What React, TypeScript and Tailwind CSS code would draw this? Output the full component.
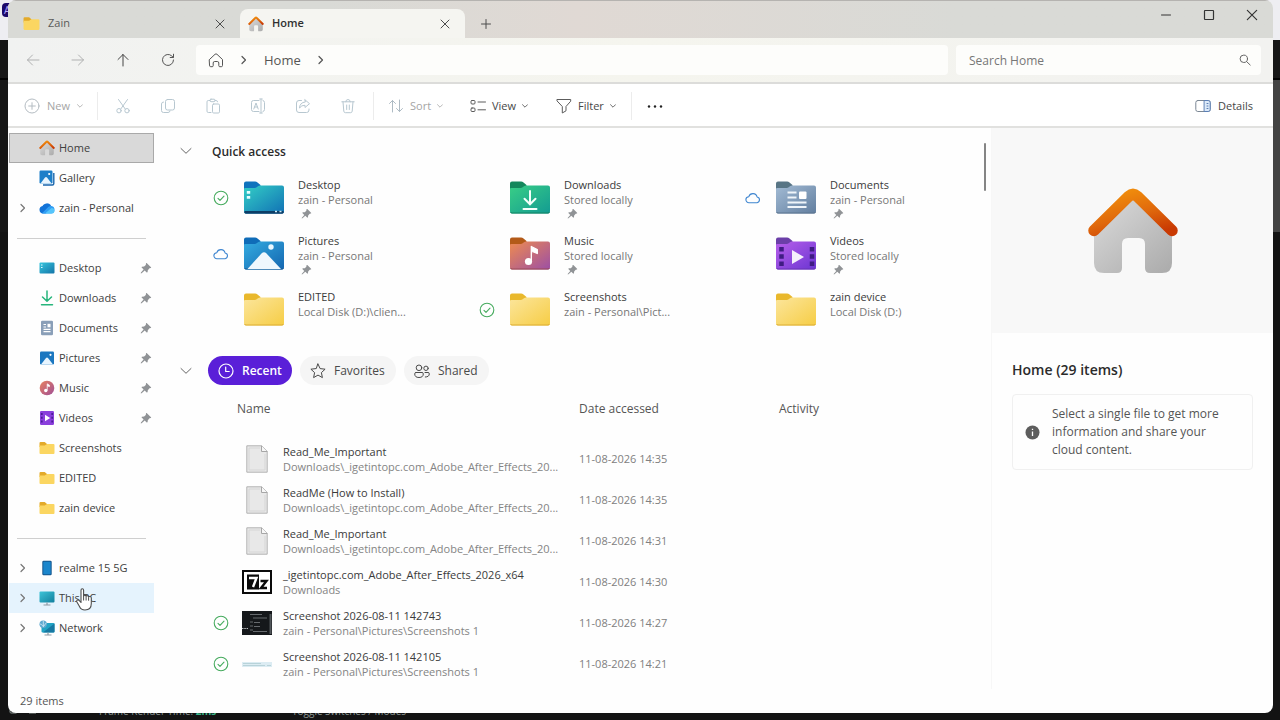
import { ReactNode } from "react";

// Types used by the lists
type SyncState = "synced" | "cloud" | "none";

interface SideItem {
  name: string;
  icon: ReactNode;
  pinned?: boolean;
  expandable?: boolean;
  active?: boolean;
  hovered?: boolean;
}

interface QuickItem {
  name: string;
  place: string;
  kind: FolderKind;
  sync: SyncState;
  pinned?: boolean;
}

interface RecentFile {
  name: string;
  place: string;
  date: string;
  thumb: ReactNode;
  sync: SyncState;
}

type FolderKind =
  | "desktop"
  | "downloads"
  | "documents"
  | "pictures"
  | "music"
  | "videos"
  | "plain";

/* ---------- line icons ---------- */

interface LineProps {
  className?: string;
  box?: number;
  width?: number;
  children: ReactNode;
}

const Line = ({ className = "size-4", box = 16, width = 1, children }: LineProps) => (
  <svg
    className={`shrink-0 ${className}`}
    viewBox={`0 0 ${box} ${box}`}
    fill="none"
    stroke="currentColor"
    strokeWidth={width}
    strokeLinecap="round"
    strokeLinejoin="round"
    aria-hidden="true"
  >
    {children}
  </svg>
);

const ChevronRight = ({ className = "size-3" }: { className?: string }) => (
  <Line className={className} box={12} width={1.2}>
    <path d="M4 2.5 7.500 6 4 9.500" />
  </Line>
);

const ChevronDown = ({ className = "size-3" }: { className?: string }) => (
  <Line className={className} box={12}>
    <path d="M1 3.500 6 8.300l5-4.800" />
  </Line>
);

// Small chevron of the toolbar drop-downs
const Caret = ({ className = "" }: { className?: string }) => (
  <Line className={`size-[6px] ${className}`} box={6} width={0.8}>
    <path d="M.5 1.700 3 4.200l2.500-2.500" />
  </Line>
);

const Close = ({ className = "size-3" }: { className?: string }) => (
  <Line className={className} box={12}>
    <path d="m2 2 8 8M10 2l-8 8" />
  </Line>
);

const Pin = ({ className = "size-3" }: { className?: string }) => (
  <svg className={`shrink-0 ${className}`} viewBox="0 0 12 12" aria-hidden="true">
    <path
      d="M6.9 1.2 11 5.2c.3.4.1.8-.3.9l-1.2.2-1.7 1.9-.2 1.9c-.1.4-.5.6-.9.3l-2-1.9-3.1 2.8-.8.1.1-.8 2.7-3.1-1.9-1.9c-.3-.4-.1-.8.3-.9l2.1-.2 1.7-1.6.2-1.4c.1-.5.6-.6.9-.3Z"
      fill="#909396"
    />
  </svg>
);

/* ---------- coloured icons ---------- */

const HomeLogo = ({ id, className = "size-4" }: { id: string; className?: string }) => (
  <svg className={`shrink-0 ${className}`} viewBox="0 0 92 88" aria-hidden="true">
    <defs>
      <linearGradient id={`${id}-roof`} x1="0.3" y1="0" x2="0.9" y2="1">
        <stop offset="0" stopColor="#ef8a0c" />
        <stop offset="0.5" stopColor="#e0690c" />
        <stop offset="1" stopColor="#c93a03" />
      </linearGradient>
      <linearGradient id={`${id}-wall`} x1="0" y1="0" x2="0.9" y2="1">
        <stop offset="0" stopColor="#dcdcdc" />
        <stop offset="1" stopColor="#adadad" />
      </linearGradient>
    </defs>
    <path
      d="M46 10 7 46v30q0 10 10 10h13q5 0 5-5V57q0-6 6-6h11q6 0 6 6v24q0 5 5 5h12q10 0 10-10V46Z"
      fill={`url(#${id}-wall)`}
    />
    <path
      d="M7 43.5 41.5 9.5Q46 5.5 50.5 9.5L85 43.5"
      fill="none"
      stroke={`url(#${id}-roof)`}
      strokeWidth="11.5"
      strokeLinecap="round"
      strokeLinejoin="round"
    />
  </svg>
);

const SmallFolder = ({ className = "size-4" }: { className?: string }) => (
  <svg className={`shrink-0 ${className}`} viewBox="0 0 16 16" aria-hidden="true">
    <path d="M.5 3q0-1 1-1h4.200L8 4v3H.5Z" fill="#e3aa2a" />
    <path d="M.5 5.5h5.200L8 4h6.500q1 0 1 1v8q0 1-1 1h-13q-1 0-1-1Z" fill="#fbd661" />
  </svg>
);

const Gallery = () => (
  <svg className="size-4 shrink-0" viewBox="0 0 16 16" aria-hidden="true">
    <path d="M14.800 3v10.500q0 1.500-1.500 1.500H4" fill="none" stroke="#1a66ad" strokeWidth="1.4" />
    <rect x=".5" y=".5" width="13" height="13" rx="1.2" fill="#1d7fc9" />
    <path d="m1.500 13.500 4.500-6q1-1.200 2 0l4.600 6Z" fill="#e8f5ff" />
    <circle cx="10.2" cy="4" r="1.1" fill="#fff" />
  </svg>
);

const OneDrive = () => (
  <svg className="size-4 shrink-0" viewBox="0 0 16 16" aria-hidden="true">
    <path d="M4 13.500a3.800 3.800 0 0 1-.5-7.500A5 5 0 0 1 12 5.500l-5 8Z" fill="#1273d8" />
    <path d="M4 13.500a4 4 0 0 1-1-.2L9.500 6.800a4 4 0 0 1 3-.8 3.800 3.800 0 0 1-.5 7.500Z" fill="#2f9df4" />
    <path d="M6 13.500 12.500 8a3 3 0 0 1 3 3.200 2.500 2.500 0 0 1-2.500 2.300Z" fill="#55c5fb" />
  </svg>
);

const DesktopIcon = () => (
  <svg className="size-4 shrink-0" viewBox="0 0 16 16" aria-hidden="true">
    <defs>
      <linearGradient id="side-desktop" x1="0" y1="0" x2="1" y2="1">
        <stop offset="0" stopColor="#36c6dd" />
        <stop offset="1" stopColor="#1474a8" />
      </linearGradient>
    </defs>
    <rect x=".5" y="2.5" width="15" height="11" rx="1" fill="url(#side-desktop)" />
    <path d="M2 5h1.500M2 7.500h1.500" stroke="#dff8ff" strokeWidth="1.2" />
  </svg>
);

const DownloadIcon = () => (
  <Line className="size-4 text-[#27b57c]" width={1.5}>
    <path d="M8 1v10M3.500 7 8 11.300 12.500 7M2.500 14.800h11" />
  </Line>
);

const DocumentIcon = () => (
  <svg className="size-4 shrink-0" viewBox="0 0 16 16" aria-hidden="true">
    <rect x="2" y=".8" width="12" height="14.4" rx="1.2" fill="#8a9fb8" />
    <path d="M4.500 4.500H7M4.500 7H7M4.500 9.300h7M4.500 11.700h7" stroke="#fff" strokeWidth="1.2" />
    <path d="M8.500 3.800h3v3.500h-3Z" fill="#fff" />
  </svg>
);

const PictureIcon = () => (
  <svg className="size-4 shrink-0" viewBox="0 0 16 16" aria-hidden="true">
    <rect x="1" y="1.5" width="14" height="13" rx="1.2" fill="#1b77c0" />
    <path d="m2 14.500 5-6.500q1-1.200 2 0l5 6.500Z" fill="#e8f5ff" />
    <circle cx="11.5" cy="4.8" r="1.1" fill="#fff" />
  </svg>
);

const MusicIcon = () => (
  <svg className="size-4 shrink-0" viewBox="0 0 16 16" aria-hidden="true">
    <defs>
      <linearGradient id="side-music" x1="0" y1="0" x2="1" y2="1">
        <stop offset="0" stopColor="#e9825f" />
        <stop offset="1" stopColor="#a04f96" />
      </linearGradient>
    </defs>
    <circle cx="8" cy="8" r="7.3" fill="url(#side-music)" />
    <circle cx="6.8" cy="10.5" r="1.7" fill="#fff" />
    <path d="M8.200 10.500V3.800l2.300 1.400v1.400L8.500 6" fill="#fff" stroke="#fff" strokeWidth=".7" />
  </svg>
);

const VideoIcon = () => (
  <svg className="size-4 shrink-0" viewBox="0 0 16 16" aria-hidden="true">
    <rect x="1" y="1" width="14" height="14" rx="1.2" fill="#8a3fdc" />
    <path d="M2.800 3v10.500M13.200 3v10.500" stroke="#4b1d97" strokeWidth="1.7" strokeDasharray="2 1.8" />
    <path d="m6 4.800 5.200 3.200L6 11.300Z" fill="#fff" />
  </svg>
);

const PhoneIcon = () => (
  <svg className="size-4 shrink-0" viewBox="0 0 16 16" aria-hidden="true">
    <rect x="3.3" y=".8" width="9.4" height="14.4" rx="1.3" fill="#15568e" />
    <rect x="4.3" y="1.8" width="7.4" height="12.4" rx=".6" fill="#1b86cc" />
  </svg>
);

const ComputerIcon = () => (
  <svg className="size-4 shrink-0" viewBox="0 0 16 16" aria-hidden="true">
    <defs>
      <linearGradient id="side-pc" x1="0" y1="0" x2="1" y2="1">
        <stop offset="0" stopColor="#3cc4d8" />
        <stop offset="1" stopColor="#127f9d" />
      </linearGradient>
    </defs>
    <rect x=".5" y="1.5" width="15" height="11" rx="1" fill="url(#side-pc)" />
    <path d="M8 12.500v2M4.500 15h7" stroke="#8e9aa3" strokeWidth="1.2" />
  </svg>
);

const NetworkIcon = () => (
  <svg className="size-4 shrink-0" viewBox="0 0 16 16" aria-hidden="true">
    <rect x="2.5" y="3" width="13" height="9.5" rx="1" fill="#22a3c4" />
    <path d="m4 12.500 11.500-9v8q0 1-1 1Z" fill="#1778a2" />
    <path d="M9 12.500v2M5.500 15h7" stroke="#8e9aa3" strokeWidth="1.2" />
    <circle cx="4.200" cy="4.200" r="3.700" fill="#5fa9cf" />
    <path d="M1 4c2 0 2 2 3.500 2S6 3 7.500 3M4.300 1v6" fill="none" stroke="#d5eef8" strokeWidth=".8" />
  </svg>
);

const Synced = () => (
  <Line className="size-4 text-[#46ab5e]" width={1.1}>
    <circle cx="8" cy="8" r="6.8" />
    <path d="m5 8.300 2 2 4-4.200" />
  </Line>
);

const Cloud = () => (
  <Line className="size-4 text-[#3f86d0]" width={1.1}>
    <path d="M4 12.700a3 3 0 0 1-.2-6A4.300 4.300 0 0 1 12.100 7a2.900 2.900 0 0 1 0 5.700Z" />
  </Line>
);

const SyncIcon = ({ state }: { state: SyncState }) => (
  <span className="flex size-4 shrink-0 items-center justify-center">
    {state === "synced" && <Synced />}
    {state === "cloud" && <Cloud />}
  </span>
);

/* ---------- big folders of quick access ---------- */

const folderColors: Record<FolderKind, { tab: string; from: string; to: string; edge: string }> = {
  desktop: { tab: "#0f73bd", from: "#30c5c4", to: "#1171b5", edge: "#0d4f80" },
  downloads: { tab: "#14875c", from: "#35c987", to: "#139b92", edge: "#158263" },
  documents: { tab: "#587585", from: "#9cb5cf", to: "#627e9f", edge: "#5d758f" },
  pictures: { tab: "#0f6cb8", from: "#31a5dc", to: "#1466b0", edge: "#135a96" },
  music: { tab: "#b35a18", from: "#e68558", to: "#9c4fa5", edge: "#9a4b55" },
  videos: { tab: "#6b3fa8", from: "#b05be8", to: "#6b35d2", edge: "#6a35b5" },
  plain: { tab: "#e9b82c", from: "#fbe393", to: "#f6cd45", edge: "#dcae37" },
};

const folderArt: Record<FolderKind, ReactNode> = {
  desktop: (
    <>
      <path d="M1.500 31h39v1.500q0 1-1 1h-37q-1 0-1-1Z" fill="#0d3d66" />
      <path d="M5.500 11v2.800M5.500 16v2.800" stroke="#e6feff" strokeWidth="3.4" />
      <path d="M32 31.500h2M36.500 31.500h2" stroke="#d0ecf8" strokeWidth="1.5" />
    </>
  ),
  downloads: (
    <path
      d="M21 11V24M15.500 18.800l5.500 5.500 5.500-5.500M14.500 29h13"
      fill="none"
      stroke="#f4fffb"
      strokeWidth="2"
      strokeLinecap="round"
    />
  ),
  documents: (
    <>
      <path d="M12.500 12.500h9M12.500 17.500h9M12.500 22.500h19M12.500 27h19" stroke="#f0f5fa" strokeWidth="2" />
      <rect x="24" y="11.5" width="7.5" height="7.5" rx="1" fill="#fff" />
    </>
  ),
  pictures: (
    <>
      <path d="m4.500 33 14-15.500q2.500-2.600 5 0L38 33Z" fill="#eff7fd" />
      <circle cx="28" cy="11" r="2.7" fill="#e9f8ff" />
    </>
  ),
  music: (
    <>
      <circle cx="19.5" cy="25.500" r="3.6" fill="#fff" />
      <path d="M22.300 25.500V10.500l6 3v4l-5-2" fill="#fff" stroke="#fff" strokeWidth="1.3" strokeLinejoin="round" />
    </>
  ),
  videos: (
    <>
      <path d="M6.500 11v21M37 11v21" stroke="#3f1c83" strokeWidth="4.5" strokeDasharray="4.5 2.7" />
      <path d="m17 14 12 7-12 7Z" fill="#f5f0fb" />
    </>
  ),
  plain: null,
};

const Folder = ({ kind, id }: { kind: FolderKind; id: string }) => {
  const color = folderColors[kind];
  return (
    <svg className="h-9 w-[42px] shrink-0" viewBox="0 0 42 36" aria-hidden="true">
      <defs>
        <linearGradient id={id} x1="0" y1="0" x2="1" y2="1">
          <stop offset="0.1" stopColor={color.from} />
          <stop offset="1" stopColor={color.to} />
        </linearGradient>
      </defs>
      <path d="M1 3.500q0-2 2-2h9q1.500 0 2.500 1L17.500 5v4.500H1Z" fill={color.tab} />
      <path
        d="M1 9q0-1 1-1h9.500q1.500 0 2.500-1l1-.8q1-.7 2.200-.7H39q2 0 2 2v24q0 2-2 2H3q-2 0-2-2Z"
        fill={`url(#${id})`}
      />
      <path d="M1.500 32q.3 1 1.500 1h36q1.200 0 1.500-1" fill="none" stroke={color.edge} />
      {folderArt[kind]}
    </svg>
  );
};

/* ---------- thumbnails of recent files ---------- */

const TextFile = () => (
  <svg className="h-7 w-[22px]" viewBox="0 0 22 28" aria-hidden="true">
    <path d="M.8.8h15l5.400 5.400v21H.8Z" fill="#e8e8e8" stroke="#b2b2b2" />
    <path d="M3 3h11M3 3v22h16V9" fill="none" stroke="#d6d6d6" />
    <path d="M15.500.8v5.700h5.700" fill="#f7f7f7" stroke="#a6a6a6" />
  </svg>
);

const SevenZip = () => (
  <svg className="h-6 w-[30px]" viewBox="0 0 30 24" aria-hidden="true">
    <rect x="1" y="1" width="28" height="22" fill="#fff" stroke="#0b0b0b" strokeWidth="2" />
    <rect x="5" y="4.500" width="12" height="15" fill="#0b0b0b" />
    <path d="M7 8h7.500l-3.500 9" fill="none" stroke="#fff" strokeWidth="2.4" />
    <path d="M18.500 11h6l-5.500 7h6" fill="none" stroke="#0b0b0b" strokeWidth="2.4" />
  </svg>
);

const DarkShot = () => (
  <svg className="h-6 w-[30px]" viewBox="0 0 30 24" aria-hidden="true">
    <rect width="30" height="24" fill="#15181b" />
    <path d="M8 3.500h12M11 7h14M8 11h3M12 11.500h6M8 15h3M12 15.500h6M8 19h3M11 20.500h14" stroke="#6f7478" strokeWidth=".9" />
    <path d="M0 17.500h6" stroke="#b9bdc0" strokeDasharray="1.500 .8" />
    <path d="M28.500 3v20" stroke="#52575b" strokeWidth="2" />
  </svg>
);

const LightShot = () => (
  <svg className="h-6 w-[30px]" viewBox="0 0 30 24" aria-hidden="true">
    <rect y="10" width="30" height="5" fill="#dcecf3" />
    <path d="M1 11.500h18M1 13.500h22M25 13.500h4" stroke="#b3d0d6" strokeWidth=".9" />
  </svg>
);

/* ---------- data ---------- */

const sideGroups: SideItem[][] = [
  [
    { name: "Home", icon: <HomeLogo id="side-home" />, active: true },
    { name: "Gallery", icon: <Gallery /> },
    { name: "zain - Personal", icon: <OneDrive />, expandable: true },
  ],
  [
    { name: "Desktop", icon: <DesktopIcon />, pinned: true },
    { name: "Downloads", icon: <DownloadIcon />, pinned: true },
    { name: "Documents", icon: <DocumentIcon />, pinned: true },
    { name: "Pictures", icon: <PictureIcon />, pinned: true },
    { name: "Music", icon: <MusicIcon />, pinned: true },
    { name: "Videos", icon: <VideoIcon />, pinned: true },
    { name: "Screenshots", icon: <SmallFolder /> },
    { name: "EDITED", icon: <SmallFolder /> },
    { name: "zain device", icon: <SmallFolder /> },
  ],
  [
    { name: "realme 15 5G", icon: <PhoneIcon />, expandable: true },
    { name: "This PC", icon: <ComputerIcon />, expandable: true, hovered: true },
    { name: "Network", icon: <NetworkIcon />, expandable: true },
  ],
];

const quickItems: QuickItem[] = [
  { name: "Desktop", place: "zain - Personal", kind: "desktop", sync: "synced", pinned: true },
  { name: "Downloads", place: "Stored locally", kind: "downloads", sync: "none", pinned: true },
  { name: "Documents", place: "zain - Personal", kind: "documents", sync: "cloud", pinned: true },
  { name: "Pictures", place: "zain - Personal", kind: "pictures", sync: "cloud", pinned: true },
  { name: "Music", place: "Stored locally", kind: "music", sync: "none", pinned: true },
  { name: "Videos", place: "Stored locally", kind: "videos", sync: "none", pinned: true },
  { name: "EDITED", place: "Local Disk (D:)\\clien...", kind: "plain", sync: "none" },
  { name: "Screenshots", place: "zain - Personal\\Pict...", kind: "plain", sync: "synced" },
  { name: "zain device", place: "Local Disk (D:)", kind: "plain", sync: "none" },
];

const longPlace = "Downloads\\_igetintopc.com_Adobe_After_Effects_20...";
const shotPlace = "zain - Personal\\Pictures\\Screenshots 1";

const recentFiles: RecentFile[] = [
  { name: "Read_Me_Important", place: longPlace, date: "11-08-2026 14:35", thumb: <TextFile />, sync: "none" },
  { name: "ReadMe (How to Install)", place: longPlace, date: "11-08-2026 14:35", thumb: <TextFile />, sync: "none" },
  { name: "Read_Me_Important", place: longPlace, date: "11-08-2026 14:31", thumb: <TextFile />, sync: "none" },
  {
    name: "_igetintopc.com_Adobe_After_Effects_2026_x64",
    place: "Downloads",
    date: "11-08-2026 14:30",
    thumb: <SevenZip />,
    sync: "none",
  },
  { name: "Screenshot 2026-08-11 142743", place: shotPlace, date: "11-08-2026 14:27", thumb: <DarkShot />, sync: "synced" },
  { name: "Screenshot 2026-08-11 142105", place: shotPlace, date: "11-08-2026 14:21", thumb: <LightShot />, sync: "synced" },
];

/* ---------- window parts ---------- */

// The dark application that stays behind the explorer window
const Backdrop = () => (
  <div className="absolute inset-0 overflow-hidden bg-[#131313]" aria-hidden="true">
    <div className="h-10 bg-[#eeeef2] pt-[3px] pl-[2px]">
      <div className="h-[14px] w-4 rounded-sm bg-[#1d0a6b] pl-[2px] text-[10px] leading-[14px] text-[#b9a8ff]">A</div>
    </div>
    <div className="h-[38px] bg-[#161616]" />
    <div className="h-[154px] border-t-2 border-black bg-linear-to-r from-[#161616] from-50% to-[#434343] to-50%" />
    <div className="absolute inset-x-0 bottom-0 flex h-4 pl-2 text-[10px] leading-[14px] text-[#8d9794]">
      <svg className="h-3 w-[91px]" viewBox="0 0 91 12">
        <path d="M2 5v3q0 1 1 1h5q1 0 1-1V5M21 5v4h7V5M38 5v4M43 5v4M54 8.500h8" fill="none" stroke="currentColor" />
      </svg>
      <span className="w-[193px]">
        Frame Render Time: <b className="text-[#39b58a]">2ms</b>
      </span>
      <span>Toggle Switches / Modes</span>
    </div>
  </div>
);

const TitleBar = () => (
  <header className="flex h-[38px] border-t border-[#b5b3b0] bg-linear-to-r from-[#d9dad6] from-25% via-[#e0d9d4] via-45% to-[#d9dad6] to-75%">
    <div className="flex w-[232px] items-center pt-2 pr-3 pl-[15px]">
      <SmallFolder className="size-[17px]" />
      <span className="ml-2 flex-1 text-[11px] text-[#5a5b59]">Zain</span>
      <button type="button" aria-label="Close tab Zain" className="flex size-4 items-center justify-center text-[#4c4c4c]">
        <Close />
      </button>
    </div>
    <div className="mt-2 flex w-[225px] items-center rounded-t-lg bg-[#f5f5f1] pr-3 pl-2">
      <HomeLogo id="tab-home" />
      <span className="ml-2 flex-1 text-[11px] font-semibold text-[#303030]">Home</span>
      <button type="button" aria-label="Close tab Home" className="flex size-4 items-center justify-center text-[#4c4c4c]">
        <Close />
      </button>
    </div>
    <button type="button" aria-label="New tab" className="flex w-[42px] items-center justify-center pt-2 text-[#4c4c4c]">
      <Line className="size-3" box={12}>
        <path d="M6 1.500v9M1.500 6h9" />
      </Line>
    </button>
    <div className="ml-auto flex h-7 text-[#333]">
      <button type="button" aria-label="Minimize" className="flex w-[43px] items-center justify-center">
        <Line className="size-3" box={12}>
          <path d="M1.500 6h9" />
        </Line>
      </button>
      <button type="button" aria-label="Maximize" className="flex w-[43px] items-center justify-center">
        <Line className="size-3" box={12} width={1.2}>
          <rect x="1.5" y="1.5" width="9" height="9" rx=".5" />
        </Line>
      </button>
      <button type="button" aria-label="Close" className="flex w-[43px] items-center justify-center">
        <Close className="size-[14px]" />
      </button>
    </div>
  </header>
);

const AddressBar = () => (
  <div className="flex h-[46px] items-center border-b-2 border-[#dcdcda] bg-linear-to-r from-[#f1f2f1] via-[#f5f5ee] to-[#f2f2f0] pr-3">
    <button type="button" aria-label="Back" className="flex w-[45px] justify-center pl-1 text-[#b0b1b1]">
      <Line>
        <path d="M14 8H2.500M7.500 3l-5 5 5 5" />
      </Line>
    </button>
    <button type="button" aria-label="Forward" className="flex w-[45px] justify-center pl-1 text-[#b0b1b1]">
      <Line>
        <path d="M2 8h11.500M8.500 3l5 5-5 5" />
      </Line>
    </button>
    <button type="button" aria-label="Up" className="flex w-[45px] justify-center pl-1 text-[#444]">
      <Line>
        <path d="M8 14V2.500M3 7.500l5-5 5 5" />
      </Line>
    </button>
    <button type="button" aria-label="Refresh" className="flex w-[45px] justify-center pl-1 text-[#555]">
      <Line>
        <path d="M13.500 8A5.500 5.500 0 1 1 11.800 4l1.400 1.300M13.500 2.200v3.300h-3.300" />
      </Line>
    </button>
    <nav
      aria-label="Address"
      className="ml-2 flex h-[30px] flex-1 items-center rounded-sm bg-[#fdfdfb] pl-3 text-[#555]"
    >
      <Line>
        <path d="M1.500 7.500 7 2.300q1-.9 2 0l5.500 5.200v6q0 1.200-1.200 1.200h-1.500q-1 0-1-1V11q0-1.500-1.500-1.500H6.700q-1.500 0-1.500 1.500v2.700q0 1-1 1H2.700q-1.200 0-1.200-1.200Z" />
      </Line>
      <ChevronRight className="mx-[14px] size-3" />
      <a href="#home" className="pt-[1px] text-[13px]">
        Home
      </a>
      <ChevronRight className="mx-[14px] size-3" />
    </nav>
    <label className="ml-2 flex h-[30px] w-[305px] items-center rounded-sm bg-[#fdfdfb] pr-[10px] pl-[13px] text-[#666]">
      <input
        type="search"
        aria-label="Search Home"
        placeholder="Search Home"
        className="min-w-0 flex-1 bg-transparent pt-[1px] text-[12px] outline-none placeholder:text-[#777]"
      />
      <Line className="size-3" box={12}>
        <circle cx="4.8" cy="4.8" r="3.7" />
        <path d="m7.600 7.600 3.600 3.400" />
      </Line>
    </label>
  </div>
);

interface ToolProps {
  label: string;
  children: ReactNode;
}

const IconTool = ({ label, children }: ToolProps) => (
  <button type="button" disabled aria-label={label} className="flex h-8 w-[45px] items-center justify-center text-[#b7c7d0]">
    <Line>{children}</Line>
  </button>
);

const Toolbar = () => (
  <div className="flex h-[44px] items-center border-b-2 border-[#e1e1df] bg-white pt-[2px] text-[11px]">
    <button type="button" disabled className="flex h-7 w-[90px] items-center gap-[7px] border-r border-[#ececec] pl-4 text-[#a5a5a5]">
      <Line className="size-4 text-[#b4bcc2]">
        <circle cx="8" cy="8" r="7" />
        <path d="M8 4.700v6.600M4.700 8h6.600" />
      </Line>
      New
      <Caret />
    </button>
    <div className="ml-[2px] flex">
      <IconTool label="Cut">
        <path d="m3.500 1.500 6.800 9.600M12.500 1.500 5.700 11.100" />
        <circle cx="4" cy="12.7" r="2.2" />
        <circle cx="12" cy="12.7" r="2.2" />
      </IconTool>
      <IconTool label="Copy">
        <rect x="5.5" y="1.5" width="9" height="10.5" rx="2" />
        <path d="M3.500 4q-2 0-2 2v6.500q0 2 2 2H8q2 0 2-1.500" />
      </IconTool>
      <IconTool label="Paste">
        <path d="M5 2.500H3.300q-1.300 0-1.300 1.300v9.400q0 1.300 1.300 1.300H6M10 2.500h1.200q1.300 0 1.300 1.300" />
        <rect x="5" y="1.2" width="5" height="2.5" rx="1" />
        <rect x="7.5" y="6" width="7" height="9" rx="1.2" />
      </IconTool>
      <IconTool label="Rename">
        <path d="M9 2.500H3.500q-2 0-2 2v7q0 2 2 2H9M13 2.500q1.500.2 1.500 2v7q0 1.800-1.500 2M11 1v14M9.700 1h2.600M9.700 15h2.600M3.800 11l2.200-6 2.200 6M4.600 9h2.800" />
      </IconTool>
      <IconTool label="Share">
        <path d="M6.500 2.500H4q-2.500 0-2.500 2.500v7q0 2.500 2.500 2.500h7.500q2.500 0 2.500-2.500v-1M10 1.800 14.500 5.700 10 9.500V7.300Q6.500 7 4.500 10q.3-5.500 5.500-6Z" />
      </IconTool>
      <IconTool label="Delete">
        <path d="M1.800 3.800h12.400M5.800 3.800q0-2.300 2.200-2.300t2.200 2.300M3 3.800l.8 9.400q.2 1.500 1.700 1.500h5q1.500 0 1.700-1.500L13 3.800M6.700 7v4.500M9.300 7v4.500" />
      </IconTool>
    </div>
    <button type="button" disabled className="ml-[3px] flex h-7 w-[97px] items-center gap-[6px] border-l border-[#ececec] pl-[14px] text-[#a5a5a5]">
      <Line className="size-4 text-[#aebbc4]">
        <path d="M4.500 14V2.500M1.500 5.500l3-3 3 3M11.500 2v11.500M8.500 10.500l3 3 3-3" />
      </Line>
      Sort
      <Caret />
    </button>
    <button type="button" className="flex h-7 w-[86px] items-center gap-[6px] text-[#474747]">
      <Line className="size-4 text-[#5c5c5c]">
        <rect x="1" y="2.5" width="4" height="3.5" rx="1" />
        <rect x="1" y="10" width="4" height="3.5" rx="1" />
        <path d="M8 4h7.500M8 11.800h7.500" />
      </Line>
      View
      <Caret />
    </button>
    <button type="button" className="flex h-7 w-[76px] items-center gap-[6px] border-r border-[#ececec] text-[#474747]">
      <Line className="size-4 text-[#5c5c5c]">
        <path d="M1.300 1.500h13.400v1.700L10 8.500v4.300L6.300 15V8.500L1.300 3.200Z" />
      </Line>
      Filter
      <Caret />
    </button>
    <button type="button" aria-label="See more" className="flex h-7 w-[46px] items-center justify-center text-[#222]">
      <svg className="size-4" viewBox="0 0 16 16" fill="currentColor" aria-hidden="true">
        <circle cx="2" cy="8.5" r="1.2" />
        <circle cx="8" cy="8.5" r="1.2" />
        <circle cx="14" cy="8.5" r="1.2" />
      </svg>
    </button>
    <button type="button" className="mr-5 ml-auto flex h-7 items-center gap-[7px] text-[#474747]">
      <Line className="size-4 text-[#5b7fb5]">
        <rect x=".8" y="2.5" width="14.4" height="11" rx="2" stroke="#7b8794" />
        <path d="M9.500 2.500h3.700q2 0 2 2v7q0 2-2 2H9.500Z" fill="#dbe9f8" />
        <path d="M12 5.500h1M12 8h1M12 10.500h1" />
      </Line>
      Details
    </button>
  </div>
);

const HandCursor = () => (
  <svg className="absolute top-[5px] left-[67px] h-6 w-[18px]" viewBox="0 0 18 24" aria-hidden="true">
    <path
      d="M5 2.200q0-1.500 1.300-1.500t1.300 1.500V8q.4-1 1.400-.9 1 .1 1.100 1.200.5-.8 1.400-.6.9.1 1.100 1.200.6-.6 1.500-.4 1.200.3 1.200 1.500v5.500q0 6.500-6.300 6.500-4 0-5.500-3.500L.9 14q-.6-1.400.5-2t2.200.8L5 14.500Z"
      fill="#fff"
      stroke="#4d4d4d"
      strokeWidth="1.1"
      strokeLinejoin="round"
    />
    <path d="M7.600 8v4.500M10.100 8.500v4M12.600 9.200v3.500" fill="none" stroke="#4d4d4d" />
  </svg>
);

const SideRow = ({ item }: { item: SideItem }) => {
  let look = "border-transparent";
  if (item.active) look = "border-[#a9a9a9] bg-[#d9d9d9]";
  if (item.hovered) look = "border-[#e5f3fd] bg-[#e5f3fd]";

  return (
    <li className="relative">
      <a href="#folder" className={`flex h-[30px] items-center border pr-[1px] pl-[7px] text-[11px] text-[#404040] ${look}`}>
        <span className="flex w-[22px] text-[#777]">{item.expandable && <ChevronRight />}</span>
        {item.icon}
        <span className="ml-1 flex-1 whitespace-nowrap">{item.name}</span>
        {item.pinned && <Pin />}
      </a>
      {item.hovered && <HandCursor />}
    </li>
  );
};

const Sidebar = () => (
  <nav aria-label="Folders" className="w-[146px] shrink-0 pt-[5px] pl-[1px]">
    {sideGroups.map((group, index) => (
      <div key={index}>
        {index > 0 && (
          <div className="flex h-[30px] items-center pr-2 pl-2">
            <hr className="flex-1 border-[#cfcfcf]" />
          </div>
        )}
        <ul>
          {group.map((item) => (
            <SideRow key={item.name} item={item} />
          ))}
        </ul>
      </div>
    ))}
  </nav>
);

const QuickAccess = () => (
  <section>
    <div className="flex h-[46px] items-center gap-5">
      <button type="button" aria-label="Collapse quick access" className="text-[#666]">
        <ChevronDown />
      </button>
      <h2 className="pt-[1px] text-[12px] font-semibold text-[#2b2b2b]">Quick access</h2>
    </div>
    <ul className="grid grid-cols-[266px_266px_1fr] pl-[33px]">
      {quickItems.map((item) => (
        <li key={item.name} className="flex h-14">
          <div className="flex h-12 items-center">
            <SyncIcon state={item.sync} />
            <span className="ml-[14px]">
              <Folder kind={item.kind} id={`folder-${item.name.replace(" ", "-")}`} />
            </span>
          </div>
          <div className="ml-[13px] pt-[3px] text-[11px] leading-[15px] whitespace-nowrap">
            <p className="text-[#3b3b3b]">{item.name}</p>
            <p className="text-[#777]">{item.place}</p>
            {item.pinned && <Pin className="mt-[1px] ml-[3px] size-[11px]" />}
          </div>
        </li>
      ))}
    </ul>
  </section>
);

const Recent = () => (
  <section className="pt-[14px]">
    <div className="flex h-[29px] items-center">
      <button type="button" aria-label="Collapse recent" className="mr-4 text-[#666]">
        <ChevronDown />
      </button>
      <div className="flex h-full gap-2 text-[12px] text-[#4a4a4a]">
        <button type="button" className="flex w-[84px] items-center gap-2 rounded-full bg-[#5a1fd8] pl-[10px] font-semibold text-white">
          <Line width={1.2}>
            <circle cx="8" cy="8" r="7" />
            <path d="M7.700 4v4.500h3.500" />
          </Line>
          Recent
        </button>
        <button type="button" className="flex w-[96px] items-center gap-2 rounded-full bg-[#f5f5f5] pl-[10px]">
          <Line>
            <path d="m8 1 2.100 4.600 5 .6-3.700 3.400 1 5L8 12.100l-4.400 2.500 1-5L.9 6.200l5-.6Z" />
          </Line>
          Favorites
        </button>
        <button type="button" className="flex w-[85px] items-center gap-2 rounded-full bg-[#f5f5f5] pl-[10px]">
          <Line>
            <circle cx="5" cy="4.8" r="2.8" />
            <circle cx="12" cy="5.3" r="2.2" />
            <path d="M2 9.500h6q1.300 0 1.300 1.300Q9.300 14.500 5 14.500T.7 10.800Q.7 9.500 2 9.500ZM11 9.500h3q1.300 0 1.300 1.300 0 3.200-4 3.200" />
          </Line>
          Shared
        </button>
      </div>
    </div>
    <div className="pt-2 pl-[33px]">
      <table className="w-full table-fixed text-left text-[11px]">
        <thead>
          <tr className="h-[45px] align-top text-[12px] leading-8 text-[#555]">
            <th className="w-[366px] pl-6 font-normal">Name</th>
            <th className="w-[200px] font-normal">Date accessed</th>
            <th className="font-normal">Activity</th>
          </tr>
        </thead>
        <tbody>
          {recentFiles.map((file) => (
            <tr key={file.name + file.date} className="h-[41px]">
              <td>
                <div className="flex items-center">
                  <SyncIcon state={file.sync} />
                  <span className="ml-[13px] flex w-[30px] justify-center">{file.thumb}</span>
                  <div className="ml-[11px] min-w-0 leading-[15px] whitespace-nowrap">
                    <p className="text-[#3b3b3b]">{file.name}</p>
                    <p className="text-[#848484]">{file.place}</p>
                  </div>
                </div>
              </td>
              <td className="pt-[2px] text-[#808080]">{file.date}</td>
              <td />
            </tr>
          ))}
        </tbody>
      </table>
    </div>
  </section>
);

const DetailsPane = () => (
  <aside className="w-[282px] shrink-0 border-l border-[#f7f7f7]">
    <div className="flex h-[205px] items-center justify-center bg-[#f8f8f8]">
      <HomeLogo id="details-home" className="h-[88px] w-[92px]" />
    </div>
    <div className="pr-5 pl-[20px]">
      <h2 className="pt-[27px] text-[14px] leading-5 font-semibold text-[#2b2b2b]">Home (29 items)</h2>
      <div className="mt-[14px] flex items-center gap-3 rounded-sm border border-[#f0f0f0] py-[10px] pr-6 pl-3">
        <svg className="size-[15px] shrink-0" viewBox="0 0 15 15" aria-hidden="true">
          <circle cx="7.5" cy="7.5" r="7" fill="#5d5d5d" />
          <path d="M7.500 6.500v4.500M7.500 3.800v1.200" stroke="#fff" strokeWidth="1.3" />
        </svg>
        <p className="text-[12px] leading-[18px] text-[#555]">
          Select a single file to get more information and share your cloud content.
        </p>
      </div>
    </div>
  </aside>
);

const App = () => {
  return (
    <div className="relative flex min-h-screen font-['Open_Sans','Noto_Sans',sans-serif]">
      <Backdrop />
      <div className="relative mr-[7px] mb-[7px] ml-2 flex flex-1 flex-col overflow-hidden rounded-lg bg-[#fefefe]">
        <TitleBar />
        <AddressBar />
        <Toolbar />
        <div className="flex flex-1">
          <Sidebar />
          <main className="relative min-w-0 flex-1 pl-[26px]">
            <QuickAccess />
            <Recent />
            <div className="absolute top-[15px] right-[5px] h-12 w-[2px] rounded-full bg-[#858585]" />
          </main>
          <DetailsPane />
        </div>
        <footer className="flex h-6 items-center pl-3 text-[11px] text-[#555]">29 items</footer>
      </div>
    </div>
  );
};

export default App;
